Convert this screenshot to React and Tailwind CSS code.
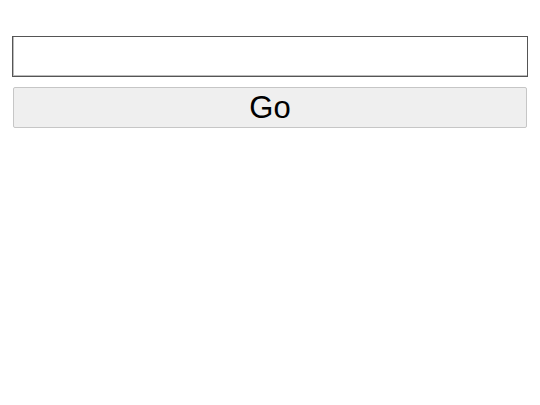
export default function App() {
  return (
    <div className="min-h-screen bg-white px-3 pt-9 font-['Liberation_Sans',Arial,sans-serif]">
      <input
        type="text"
        className="block w-full h-[41px] border border-[#555] bg-white px-2 outline-none shadow-[inset_1px_-1px_0_#bbb]"
      />
      <button
        type="button"
        className="mt-[10px] mx-px block w-[calc(100%-2px)] h-[41px] rounded-[2px] border border-[#c6c6c6] bg-[#efefef] text-[31px] leading-none text-black"
      >
        Go
      </button>
    </div>
  );
}
